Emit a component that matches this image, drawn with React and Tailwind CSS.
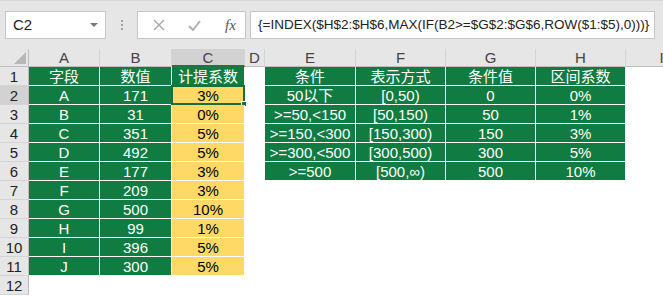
import React from "react";

const GREEN = "bg-[#107c41] text-white";
const YELLOW = "bg-[#ffd966] text-black";

const cols = ["A", "B", "C", "D", "E", "F", "G", "H", "I"];

const left = [
  ["字段", "数值", "计提系数"],
  ["A", "171", "3%"],
  ["B", "31", "0%"],
  ["C", "351", "5%"],
  ["D", "492", "5%"],
  ["E", "177", "3%"],
  ["F", "209", "3%"],
  ["G", "500", "10%"],
  ["H", "99", "1%"],
  ["I", "396", "5%"],
  ["J", "300", "5%"],
];

const right = [
  ["条件", "表示方式", "条件值", "区间系数"],
  ["50以下", "[0,50)", "0", "0%"],
  [">=50,<150", "[50,150)", "50", "1%"],
  [">=150,<300", "[150,300)", "150", "3%"],
  [">=300,<500", "[300,500)", "300", "5%"],
  [">=500", "[500,∞)", "500", "10%"],
];

const Cell = ({ kind, children, selected }) => {
  if (kind === "green")
    return (
      <div className={`${GREEN} border-r border-b border-white flex items-center justify-center h-[19px] leading-none`}>
        {children}
      </div>
    );
  if (kind === "yellow")
    return (
      <div className={`${YELLOW} border-r border-b border-white flex items-center justify-center h-[19px] leading-none relative`}>
        {children}
        {selected && (
          <>
            <div className="absolute -left-[1px] -top-[1px] -right-[1px] -bottom-[1px] border-2 border-[#1e6b3c]" />
            <div className="absolute -right-[3px] -bottom-[3px] w-[6px] h-[6px] bg-[#1e6b3c] border border-white" />
          </>
        )}
      </div>
    );
  return <div className="h-[19px] bg-white" />;
};

const App = () => {
  const rows = Array.from({ length: 12 }, (_, i) => i + 1);
  return (
    <div className="w-[663px] h-[297px] overflow-hidden bg-white font-['Liberation_Sans','Noto_Sans_CJK_SC',sans-serif] text-[15px]">
      {/* formula bar */}
      <div className="h-[49px] bg-[#e6e6e6] border-t border-[#d6d6d6] flex items-start pt-[10px]">
        <div className="ml-[5px] w-[101px] h-[28px] bg-white border border-[#c6c6c6] flex items-center justify-between pl-[7px] pr-[7px]">
          <span className="text-[#222]">C2</span>
          <span className="w-0 h-0 border-l-[4px] border-r-[4px] border-t-[4px] border-l-transparent border-r-transparent border-t-[#777]" />
        </div>
        <div className="w-[31px] h-[28px] flex flex-col items-center justify-center gap-[2px]">
          <span className="w-[2px] h-[2px] bg-[#a0a0a0]" />
          <span className="w-[2px] h-[2px] bg-[#a0a0a0]" />
          <span className="w-[2px] h-[2px] bg-[#a0a0a0]" />
        </div>
        <div className="w-[109px] h-[28px] bg-white border border-[#c6c6c6] flex items-center">
          <svg width="12" height="12" viewBox="0 0 12 12" className="ml-[15px]">
            <path d="M1 1L11 11M11 1L1 11" stroke="#a8a8a8" strokeWidth="1.4" fill="none" />
          </svg>
          <svg width="13" height="11" viewBox="0 0 13 11" className="ml-[23px]">
            <path d="M1 6L5 10L12 1" stroke="#b0b0b0" strokeWidth="2" fill="none" />
          </svg>
          <span className="ml-[24px] italic font-['Liberation_Serif',serif] text-[15px] text-[#555]">fx</span>
        </div>
        <div className="ml-[4px] w-[405px] h-[28px] bg-white border border-[#c6c6c6] flex items-center pl-[7px] text-[13.5px] text-[#222] whitespace-nowrap overflow-hidden">
          {"{=INDEX($H$2:$H$6,MAX(IF(B2>=$G$2:$G$6,ROW($1:$5),0)))}"}
        </div>
      </div>

      {/* sheet */}
      <div className="w-[698px] grid grid-cols-[29px_71px_72px_73px_20px_91px_90px_90px_90px_72px]">
        {/* column headers */}
        <div className="h-[18px] bg-[#e6e6e6] border-r border-b border-[#bdbdbd] relative">
          <div className="absolute right-[2px] bottom-[2px] w-0 h-0 border-b-[12px] border-l-[12px] border-b-[#b7b7b7] border-l-transparent" />
        </div>
        {cols.map((c) => (
          <div
            key={c}
            className={`h-[18px] border-r border-[#d4d4d4] flex items-center justify-center text-[#444] leading-none ${
              c === "C" ? "bg-[#d2d2d2] border-b-2 border-b-[#217346]" : "bg-[#e6e6e6] border-b border-b-[#bdbdbd]"
            }`}
          >
            {c}
          </div>
        ))}

        {rows.map((r) => {
          const l = left[r - 1];
          const rt = right[r - 1];
          return (
            <React.Fragment key={r}>
              <div
                className={`h-[19px] border-r border-b border-r-[#bdbdbd] border-b-[#d4d4d4] flex items-center justify-center text-[#222] leading-none ${
                  r === 2 ? "bg-[#d2d2d2]" : "bg-[#e6e6e6]"
                }`}
              >
                {r}
              </div>
              {l ? (
                <>
                  <Cell kind="green">{l[0]}</Cell>
                  <Cell kind="green">{l[1]}</Cell>
                  <Cell kind={r === 1 ? "green" : "yellow"} selected={r === 2}>
                    {l[2]}
                  </Cell>
                </>
              ) : (
                <>
                  <Cell />
                  <Cell />
                  <Cell />
                </>
              )}
              <Cell />
              {rt ? (
                rt.map((t, i) => (
                  <Cell key={i} kind="green">
                    {t}
                  </Cell>
                ))
              ) : (
                <>
                  <Cell />
                  <Cell />
                  <Cell />
                  <Cell />
                </>
              )}
              <Cell />
            </React.Fragment>
          );
        })}
      </div>
    </div>
  );
};

export default App;
